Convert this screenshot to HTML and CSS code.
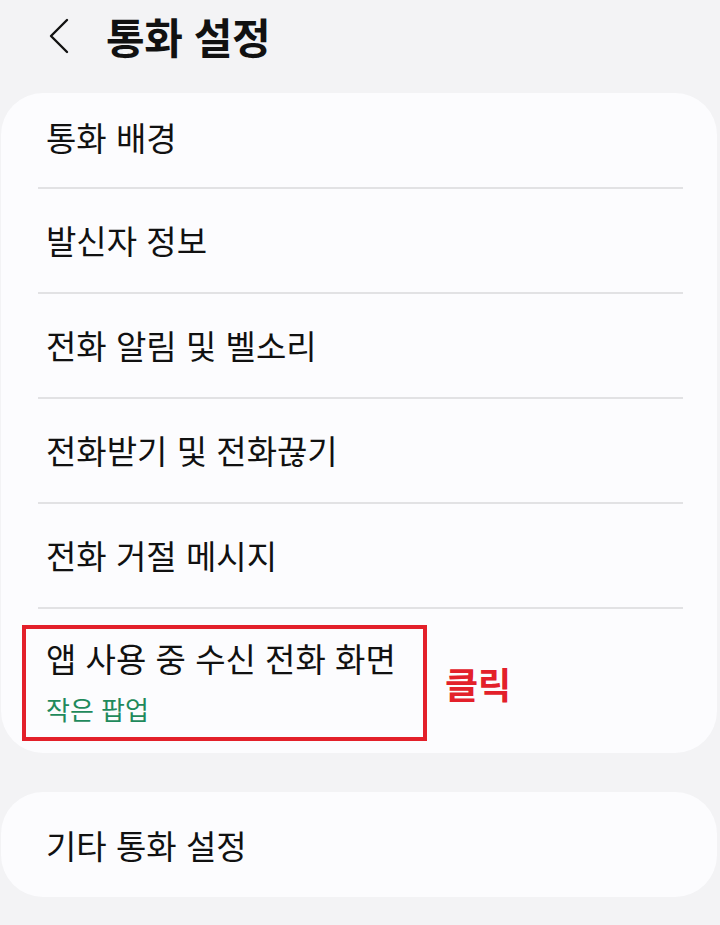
FILE: index.html
```html
<!DOCTYPE html>
<html lang="ko">
<head>
<meta charset="utf-8">
<link rel="stylesheet" href="styles.css">
</head>
<body>
<header class="header">
  <svg class="back" width="22" height="36" viewBox="0 0 22 36"><path d="M19 2 L3 18 L19 34" fill="none" stroke="#111" stroke-width="2.4" stroke-linecap="round" stroke-linejoin="round"/></svg>
  <h1 class="title">통화 설정</h1>
</header>
<section class="card">
  <div class="item first">통화 배경</div>
  <div class="divider"></div>
  <div class="item">발신자 정보</div>
  <div class="divider"></div>
  <div class="item">전화 알림 및 벨소리</div>
  <div class="divider"></div>
  <div class="item">전화받기 및 전화끊기</div>
  <div class="divider"></div>
  <div class="item">전화 거절 메시지</div>
  <div class="divider"></div>
  <div class="item last">
    <div>앱 사용 중 수신 전화 화면</div>
    <div class="sub">작은 팝업</div>
    <div class="highlight"></div>
    <div class="click">클릭</div>
  </div>
</section>
<section class="card card2">
  <div class="item single">기타 통화 설정</div>
</section>
</body>
</html>
```
FILE: styles.css
```css
html, body {
  margin: 0;
  padding: 0;
  background: #f3f3f5;
  font-family: "Noto Sans CJK KR", "Noto Sans", sans-serif;
  color: #111;
}
.header {
  display: flex;
  align-items: center;
  height: 72px;
  padding-left: 48px;
  margin-bottom: 21px;
}
.back {
  display: block;
  flex: none;
}
.title {
  margin: 0 0 0 36px;
  font-size: 42px;
  font-weight: 700;
  letter-spacing: -0.4px;
  line-height: 1;
}
.card {
  background: #fcfcfe;
  border-radius: 42px;
  margin: 0 3px 0 1px;
}
.item {
  position: relative;
  font-size: 33px;
  line-height: 40px;
  padding: 31px 0 32px 45px;
}
.item.first {
  padding-top: 24px;
  padding-bottom: 30px;
}
.divider {
  height: 2px;
  background: #e2e2e4;
  margin: 0 34px 0 37px;
}
.item.last {
  padding-top: 29px;
  padding-bottom: 28px;
}
.sub {
  font-size: 26px;
  line-height: 32px;
  color: #1f8a5c;
  margin-top: 15px;
}
.highlight {
  position: absolute;
  left: 21px;
  top: 16px;
  width: 397px;
  height: 108px;
  border: 4px solid #e3202a;
}
.click {
  position: absolute;
  left: 444px;
  top: 54px;
  font-size: 36px;
  font-weight: 700;
  color: #e3202a;
  line-height: 40px;
}
.card2 {
  margin-top: 39px;
}
.item.single {
  padding: 33px 0 32px 45px;
}
```
